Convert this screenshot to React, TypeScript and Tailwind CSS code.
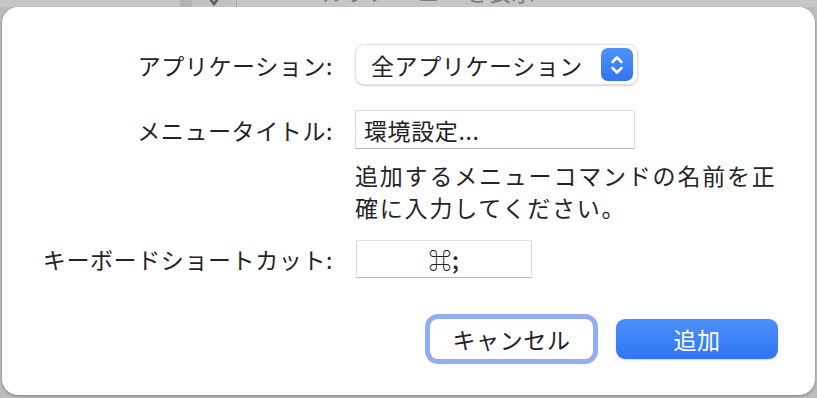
const jp = "font-['Noto_Sans_CJK_JP','Noto_Sans',sans-serif]";

function Stepper() {
  return (
    <div className="flex h-[33px] w-[32px] items-center justify-center rounded-[7px] bg-gradient-to-b from-[#4f93f9] to-[#2f74f2]">
      <svg width="16" height="22" viewBox="0 0 16 22" fill="none" stroke="white" strokeWidth="2.6" strokeLinecap="round" strokeLinejoin="round">
        <path d="M3.5 8 L8 3.5 L12.5 8" />
        <path d="M3.5 14 L8 18.5 L12.5 14" />
      </svg>
    </div>
  );
}

function Row({ label, children }: { label: string; children: React.ReactNode }) {
  return (
    <div className="flex items-center">
      <div className="w-[333px] pr-[2px] text-right">{label}</div>
      <div className="ml-[20px]">{children}</div>
    </div>
  );
}

export default function App() {
  return (
    <div className={`h-[398px] w-[817px] overflow-hidden bg-[#bcbcbc] ${jp}`}>
      {/* window behind the sheet, only its bottom edge shows */}
      <div className="flex h-[7px] overflow-hidden">
        <div className="w-[180px] bg-[#c6c6c6]" />
        <div className="w-[12px] bg-[#b2b2b2]" />
        <div className="flex w-[45px] justify-center border-r border-[#a8a8a8] bg-[#c2c2c2]">
          <svg className="mt-[-6px]" width="16" height="13" viewBox="0 0 16 13" fill="none" stroke="#5e5e5e" strokeWidth="2.6" strokeLinecap="round">
            <path d="M2 2 L8 10 L14 2" />
          </svg>
        </div>
        <div className="flex-1 bg-[#c6c6c6] pl-[62px]">
          <div className="mt-[-24px] text-[23px] leading-[30px] tracking-[0.6px] text-[#7c7c7c]">ヘルプメニューを表示</div>
        </div>
      </div>

      <div className="ml-[2px] h-[388px] w-[813px] rounded-[16px] bg-white pt-[37px] text-[23px] leading-[32px] tracking-[0.6px] text-[#242424] shadow-[0_1px_3px_rgba(0,0,0,0.35)]">
        <Row label="アプリケーション:">
          <div className="flex h-[41px] w-[283px] items-center justify-between rounded-[9px] border border-[#e2e2e2] bg-white pl-[15px] pr-[4px] shadow-[0_1px_2px_rgba(0,0,0,0.18)]">
            <span>全アプリケーション</span>
            <Stepper />
          </div>
        </Row>

        <div className="mt-[25px]">
          <Row label="メニュータイトル:">
            <div className="flex h-[39px] w-[280px] items-center border border-[#dedede] border-b-[#b9b9b9] bg-white pl-[8px]">
              環境設定...
            </div>
          </Row>
        </div>

        <div className="ml-[353px] mt-[10px] w-[450px] tracking-[1.8px]">
          追加するメニューコマンドの名前を正
          <br />
          確に入力してください。
        </div>

        <div className="mt-[17px]">
          <Row label="キーボードショートカット:">
            <div className="ml-[1px] flex h-[38px] w-[176px] items-center justify-center border border-[#dedede] border-b-[#b9b9b9] bg-white font-medium">
              ⌘;
            </div>
          </Row>
        </div>

        <div className="mr-[37px] mt-[41px] flex justify-end gap-[23px]">
          <button className="h-[40px] w-[163px] rounded-[8px] bg-white text-[#222] ring-[5px] ring-[#90aff2]">
            キャンセル
          </button>
          <button className="h-[40px] w-[162px] rounded-[9px] bg-gradient-to-b from-[#4b90f8] to-[#3175f4] text-white shadow-[0_1px_2px_rgba(0,0,0,0.15)]">
            追加
          </button>
        </div>
      </div>
    </div>
  );
}
